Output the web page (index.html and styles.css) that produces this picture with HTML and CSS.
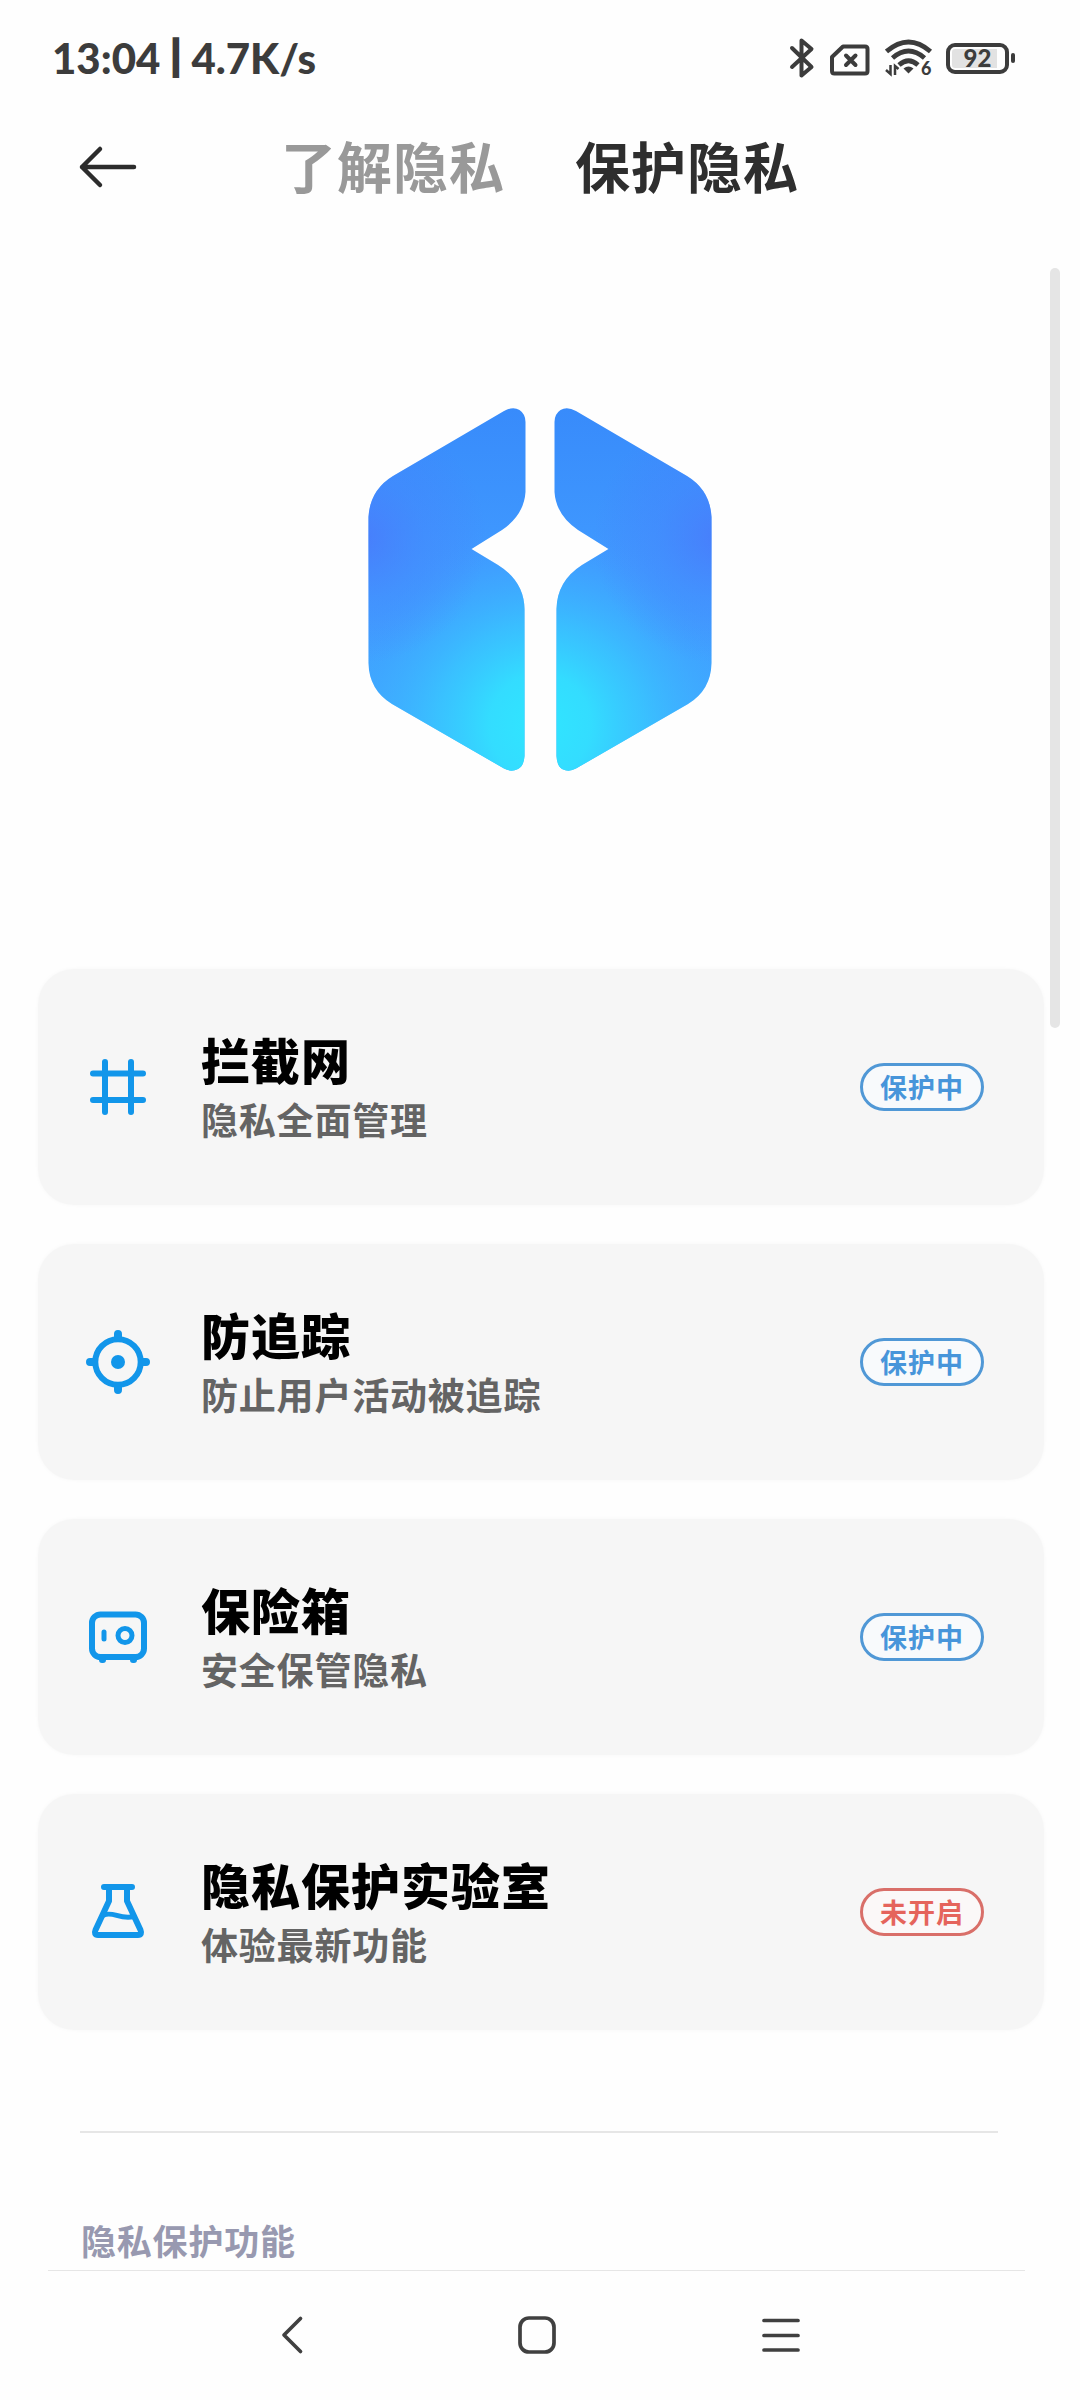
FILE: index.html
```html
<!DOCTYPE html>
<html lang="zh-CN">
<head>
<meta charset="utf-8">
<title>保护隐私</title>
<link rel="stylesheet" href="styles.css">
</head>
<body>
<div class="screen">
  <header class="status">
    <div class="status-text"><span>13:04</span><span class="sep">|</span><span>4.7K/s</span></div>
    <div class="status-icons">
      <svg class="bt" width="26" height="42" viewBox="0 0 26 42" fill="none" stroke="#3c3c3c" stroke-width="4" stroke-linecap="round" stroke-linejoin="round"><path d="M3 11 L22.500 30 L12.500 38.500 V3.500 L22.500 12 L3 30"/></svg>
      <svg class="sim" width="42" height="34" viewBox="0 0 42 34" fill="none" stroke="#3c3c3c" stroke-width="4" stroke-linecap="round" stroke-linejoin="round"><path d="M14 3.500 H36 Q38.500 3.500 38.500 6 V28 Q38.500 30.500 36 30.500 H5.500 Q3 30.500 3 28 V14 Z"/><path d="M17 12.500 L26.500 22 M26.500 12.500 L17 22"/></svg>
      <svg class="wifi" width="50" height="42" viewBox="0 -2 50 42" fill="none" stroke="#3c3c3c"><path d="M1.500 12.500 Q23.500 -6.500 45.500 12.500" stroke-width="4.800"/><path d="M7.500 19 Q23.500 5 39.500 19" stroke-width="4.800"/><path d="M14 26 Q23.500 17.500 33 26" stroke-width="4.800"/><path d="M18.500 29.500 Q23.500 25.500 28.500 29.500 L23.500 34.500 Z" fill="#3c3c3c" stroke="none"/><path d="M5.500 26 V35 L1 31 M10 36 V27 L13.500 30" stroke-width="2.500"/><text class="wifi-gen" x="36" y="35.500">6</text></svg>
      <div class="battery"><span class="battery-level">92</span></div><span class="battery-nub"></span>
    </div>
  </header>

  <nav class="tabs">
    <svg class="back" width="60" height="44" viewBox="0 0 60 44" fill="none" stroke="#2c2c2c" stroke-width="4.500" stroke-linecap="round" stroke-linejoin="round"><path d="M22 4 L4 22 L22 40 M4 22 H56"/></svg>
    <span class="tab tab-muted">了解隐私</span>
    <span class="tab">保护隐私</span>
  </nav>

  <section class="hero">
    <svg width="400" height="420" viewBox="0 0 400 420">
      <defs>
        <linearGradient id="base" gradientUnits="userSpaceOnUse" x1="0" y1="28" x2="0" y2="390"><stop offset="0" stop-color="#388bfb"/><stop offset=".45" stop-color="#409aff"/><stop offset="1" stop-color="#3fb0ff"/></linearGradient>
        <radialGradient id="cyan" gradientUnits="userSpaceOnUse" cx="200" cy="345" r="205"><stop offset="0" stop-color="#30e6ff"/><stop offset=".25" stop-color="#32e2ff" stop-opacity=".9"/><stop offset=".5" stop-color="#36d0ff" stop-opacity=".62"/><stop offset=".75" stop-color="#3cb4ff" stop-opacity=".36"/><stop offset="1" stop-color="#3f98ff" stop-opacity="0"/></radialGradient>
        <radialGradient id="violetL" gradientUnits="userSpaceOnUse" cx="22" cy="158" r="125"><stop offset="0" stop-color="#4a78fb" stop-opacity=".8"/><stop offset=".5" stop-color="#477ffc" stop-opacity=".35"/><stop offset="1" stop-color="#4a7afb" stop-opacity="0"/></radialGradient>
        <radialGradient id="violetR" gradientUnits="userSpaceOnUse" cx="378" cy="158" r="125"><stop offset="0" stop-color="#4a78fb" stop-opacity=".8"/><stop offset=".5" stop-color="#477ffc" stop-opacity=".35"/><stop offset="1" stop-color="#4a7afb" stop-opacity="0"/></radialGradient>
        <path id="shape" d="M164 31 Q173 26 179.500 30 Q185.500 34 185.500 42 V112 Q184 135 162 150 L131.500 169 L158 185 Q184 201 184.500 229 V376 Q184 386 178 389 Q171 392.500 164 388.500 L52 324 Q29 310 28.500 283 V137 Q30 110 53 96 Z M236 31 Q227 26 220.500 30 Q214.500 34 214.500 42 V112 Q216 135 238 150 L268.500 169 L242 185 Q217 201 216.500 229 V376 Q217 386 222 389 Q229 392.500 236 388.500 L348 324 Q371 310 371.500 283 V137 Q370 110 347 96 Z"/>
      </defs>
      <use href="#shape" fill="url(#base)"/><use href="#shape" fill="url(#cyan)"/><use href="#shape" fill="url(#violetL)"/><use href="#shape" fill="url(#violetR)"/>
    </svg>
    <div class="scrollbar"></div>
  </section>

  <main class="cards">
    <article class="card">
      <svg class="icon" viewBox="0 0 64 64"><path d="M19 7 V57 M45 7 V57 M7 18.500 H57 M7 45 H57"/></svg>
      <div class="info"><h2>拦截网</h2><p>隐私全面管理</p></div>
      <span class="pill">保护中</span>
    </article>
    <article class="card">
      <svg class="icon" viewBox="0 0 64 64"><circle cx="32" cy="32" r="22.700"/><circle cx="32" cy="32" r="7" class="solid"/><path class="nubs" d="M32 4 V8 M32 56 V60 M4 32 H8 M56 32 H60"/></svg>
      <div class="info"><h2>防追踪</h2><p>防止用户活动被追踪</p></div>
      <span class="pill">保护中</span>
    </article>
    <article class="card">
      <svg class="icon" viewBox="0 0 64 64"><rect x="6" y="9.500" width="52" height="42.500" rx="8.500"/><circle cx="39" cy="30.500" r="7" class="thin"/><path class="thin" d="M18 27 V34"/><path d="M16 55 H17 M47 55 H48"/></svg>
      <div class="info"><h2>保险箱</h2><p>安全保管隐私</p></div>
      <span class="pill">保护中</span>
    </article>
    <article class="card">
      <svg class="icon" viewBox="0 0 64 64"><path d="M18 7 H46 M23 7 V21 L9.500 50 Q7.500 55 12 55 H52 Q56.500 55 54.500 50 L41 21 V7"/><path class="thin" d="M18 35 C27 31 34 40 48 36.500"/></svg>
      <div class="info"><h2>隐私保护实验室</h2><p>体验最新功能</p></div>
      <span class="pill pill-off">未开启</span>
    </article>
  </main>

  <section class="more"><h3>隐私保护功能</h3></section>

  <footer class="sysnav">
    <svg width="24" height="40" viewBox="0 0 24 40"><path d="M20.500 3.500 L4 20 L20.500 36.500"/></svg>
    <svg class="home" width="40" height="40" viewBox="0 0 40 40"><rect x="3" y="3" width="34" height="34" rx="9"/></svg>
    <svg width="40" height="40" viewBox="0 0 40 40"><path d="M3 5.500 H37 M3 20.500 H37 M3 35 H37"/></svg>
  </footer>
</div>
</body>
</html>
```
FILE: styles.css
```css
* { box-sizing: border-box; margin: 0; padding: 0; }
body { background: #fefefe; font-family: "Noto Sans CJK SC", sans-serif; }
svg { display: block; flex: none; }
.screen { width: 1080px; height: 2400px; display: flex; flex-direction: column; overflow: hidden; }

.status { height: 116px; padding: 0 65px 0 52px; display: flex; justify-content: space-between; align-items: center; color: #3c3c3c; }
.status-text { display: flex; align-items: center; font: 900 42px/60px "Lato", sans-serif; }
.sep { width: 31px; font: 900 34px/60px "Inter", sans-serif; text-align: center; }
.status-icons { display: flex; align-items: center; }
.bt { margin-right: 14px; }
.sim { margin-right: 14px; margin-top: 3px; }
.wifi { margin-right: 11px; }
.wifi-gen { font: 900 18px "Lato", sans-serif; fill: #3c3c3c; stroke: none; }
.battery { width: 63px; height: 31px; border: 4px solid #3c3c3c; border-radius: 9px; padding: 2px; display: flex; }
.battery-level { flex: 1; display: flex; align-items: center; justify-content: center; font: 900 24px/20px "Lato", sans-serif; background: linear-gradient(90deg, #e2e2e2 88%, transparent 88%); border-radius: 3px; }
.battery-nub { width: 4px; height: 10px; margin-left: 2px; border-radius: 2px; background: #3c3c3c; }

.tabs { height: 102px; padding-left: 78px; display: flex; align-items: center; }
.back { margin-right: 143px; }
.tab { font-size: 55px; line-height: 60px; font-weight: 700; letter-spacing: 1px; color: #2e2e2e; margin-top: -7px; }
.tab-muted { color: #999; margin-right: 70px; }

.hero { height: 751px; padding: 50px 20px 0 340px; display: flex; justify-content: space-between; align-items: flex-start; }
.hero svg { margin-top: 112px; }
.scrollbar { width: 10px; height: 760px; border-radius: 5px; background: #e5e5e5; flex: none; }

.cards { padding: 0 36px 0 38px; display: flex; flex-direction: column; gap: 39px; }
.card { height: 236px; border-radius: 36px; background: #f6f6f6; box-shadow: 0 0 4px #f8f8f8; padding: 0 60px 0 48px; display: flex; align-items: center; }
.icon { width: 64px; height: 64px; fill: none; stroke: #1296ea; stroke-width: 6px; stroke-linecap: round; stroke-linejoin: round; }
.icon .solid { fill: #1296ea; stroke: none; }
.icon .nubs { stroke-width: 8px; }
.icon .thin { stroke-width: 5px; }
.info { flex: 1; margin-left: 51px; padding-top: 4px; }
.info h2 { font-size: 49px; line-height: 60px; font-weight: 900; letter-spacing: 1px; color: #000; }
.info p { font-size: 37px; line-height: 60px; font-weight: 700; letter-spacing: .8px; color: #646464; }
.pill { width: 124px; height: 48px; border: 3px solid #5098d6; border-radius: 24px; background: #f8fafc; color: #4795da; font-size: 27px; line-height: 41px; font-weight: 600; letter-spacing: 1px; text-align: center; }
.pill-off { border-color: #d96f69; color: #e5645c; background: #fbf8f8; }

.more { height: 140px; margin: 101px 55px 0 48px; padding: 0 27px 0 32px; border-bottom: 1px solid #e6e6e6; }
.more h3 { border-top: 2px solid #e6e6e6; padding: 82px 0 0 1px; font-size: 35px; line-height: 50px; font-weight: 700; letter-spacing: .8px; color: #9899b0; }

.sysnav { height: 129px; padding: 0 279px 2px 280px; display: flex; justify-content: space-between; align-items: center; }
.sysnav svg { fill: none; stroke: #404040; stroke-width: 3.7px; stroke-linecap: round; stroke-linejoin: round; }
.sysnav .home { margin-left: 8px; }
```
